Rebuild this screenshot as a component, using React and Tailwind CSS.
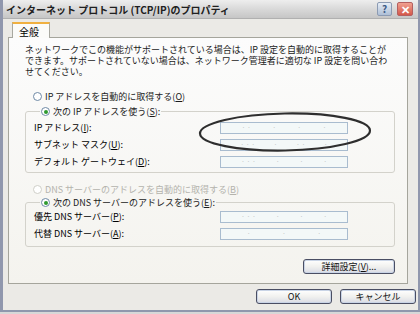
import React from 'react'

const jp = { fontFamily: '"Noto Sans CJK JP", "Noto Sans", sans-serif' }

function Radio({ checked, disabled, children }) {
  return (
    <span className={`flex items-center gap-[3px] ${disabled ? 'text-[#b4b3ad]' : 'text-[#1a1a1a]'}`}>
      <span className={`w-[9px] h-[9px] rounded-full border flex items-center justify-center bg-white ${disabled ? 'border-[#cfcfc8]' : 'border-[#6f8aa6]'}`}>
        {checked && <span className="w-[4px] h-[4px] rounded-full bg-[#2f9a2f]" />}
      </span>
      <span>{children}</span>
    </span>
  )
}

function Field({ label, dots }) {
  return (
    <div className="h-[17px] flex items-center">
      <span className="w-[186px]">{label}</span>
      <div className="w-[128px] h-[12px] border border-[#a9bccf] bg-[#f3f8f8] flex items-center justify-around px-[10px] text-[7px] leading-none text-[#c4c8c8]">
        {dots.map((d, i) => <span key={i}>{d}</span>)}
      </div>
    </div>
  )
}

function XpButton({ children, w }) {
  return (
    <button className={`${w} h-[15px] rounded-[3px] border border-[#4a4e63] bg-gradient-to-b from-white via-[#f1f1ef] to-[#d9dbe4] shadow-[inset_0_0_0_1px_#c9d4e6] flex items-center justify-center text-[9px] leading-none text-[#111]`}>
      {children}
    </button>
  )
}

export default function App() {
  return (
    <div className="w-[420px] h-[314px] bg-[#d8d8d8]" style={jp}>
      <div className="w-[420px] h-[312px] border-l-[3px] border-r-[2px] border-b-[2px] border-[#9097ad] bg-[#ebeae6] flex flex-col text-[9px] leading-[11px]">
        {/* title bar */}
        <div className="h-[19px] flex items-center justify-between pl-[3px] pr-[5px] bg-gradient-to-b from-[#eeeeee] via-[#d9d9d9] to-[#c6c6c6] border-b border-[#b0b0b0]">
          <span className="font-bold text-[10px] text-[#202020]">インターネット プロトコル (TCP/IP)のプロパティ</span>
          <div className="flex gap-[5px]">
            <div className="w-[15px] h-[14px] rounded-[2px] border border-[#8c9bb3] bg-gradient-to-b from-[#e6edf6] to-[#aebfd6] flex items-center justify-center text-[10px] font-bold text-[#3d5a86] leading-none">?</div>
            <div className="w-[16px] h-[14px] rounded-[2px] border border-[#b46060] bg-gradient-to-b from-[#f0a090] to-[#d4574a] flex items-center justify-center text-[11px] font-bold text-white leading-none">✕</div>
          </div>
        </div>

        <div className="flex-1 flex flex-col pl-[5px] pr-[10px]">
          {/* tabs */}
          <div className="h-[18px] flex items-end pl-[4px]">
            <div className="w-[38px] h-[16px] border-t-2 border-t-[#f0b040] border-x border-[#a8a8a0] bg-[#fbfbf9] flex items-center pl-[6px] text-[10px] -mb-px relative z-10">全般</div>
          </div>
          {/* panel */}
          <div className="h-[247px] border border-[#a5a59c] bg-gradient-to-b from-[#fcfcfc] to-[#f4f3ee] pl-[16px] pr-[12px] pt-[6px] flex flex-col">
            <p className="text-[#1a1a1a]">
              ネットワークでこの機能がサポートされている場合は、IP 設定を自動的に取得することができます。サポートされていない場合は、ネットワーク管理者に適切な IP 設定を問い合わせてください。
            </p>
            <div className="h-[13px] mt-[13px] pl-[8px] flex items-center">
              <Radio>IP アドレスを自動的に取得する(<u>O</u>)</Radio>
            </div>
            <div className="relative mt-[3px]">
              <fieldset className="border border-[#d3d2cb] rounded-[3px] pl-[8px] pb-[2px] pt-[2px]">
                <legend className="px-[1px] ml-[6px]">
                  <Radio checked>次の IP アドレスを使う(<u>S</u>):</Radio>
                </legend>
                <Field label={<>IP アドレス(<u>I</u>):</>} dots={['·  ·', '·', '·', '·']} />
                <Field label={<>サブネット マスク(<u>U</u>):</>} dots={['· · ·', '·', '· ·', '·']} />
                <Field label={<>デフォルト ゲートウェイ(<u>D</u>):</>} dots={['· ·  ·', '·', '·', '·']} />
              </fieldset>
              {/* hand-drawn highlight */}
              <svg className="absolute left-[172px] top-[5px] pointer-events-none" width="176" height="44" viewBox="0 0 176 44">
                <ellipse cx="88" cy="21" rx="85" ry="18.5" fill="none" stroke="#2e2e2e" strokeWidth="2.2" transform="rotate(-1 88 21)" />
              </svg>
            </div>
            <div className="h-[13px] mt-[10px] pl-[8px] flex items-center">
              <Radio disabled>DNS サーバーのアドレスを自動的に取得する(<u>B</u>)</Radio>
            </div>
            <fieldset className="mt-[1px] border border-[#d3d2cb] rounded-[3px] pl-[8px] pb-[4px]">
              <legend className="px-[1px] ml-[6px]">
                <Radio checked>次の DNS サーバーのアドレスを使う(<u>E</u>):</Radio>
              </legend>
              <Field label={<>優先 DNS サーバー(<u>P</u>):</>} dots={['· · ·', '·', '·', '·']} />
              <Field label={<>代替 DNS サーバー(<u>A</u>):</>} dots={['·', '·', '·']} />
            </fieldset>
            <div className="flex justify-end mt-[12px]">
              <XpButton w="w-[92px]">詳細設定(<u>V</u>)...</XpButton>
            </div>
          </div>
          {/* bottom buttons */}
          <div className="flex justify-end gap-[8px] mt-[5px] -mr-[8px]">
            <XpButton w="w-[76px]">OK</XpButton>
            <XpButton w="w-[76px]">キャンセル</XpButton>
          </div>
        </div>
      </div>
    </div>
  )
}
